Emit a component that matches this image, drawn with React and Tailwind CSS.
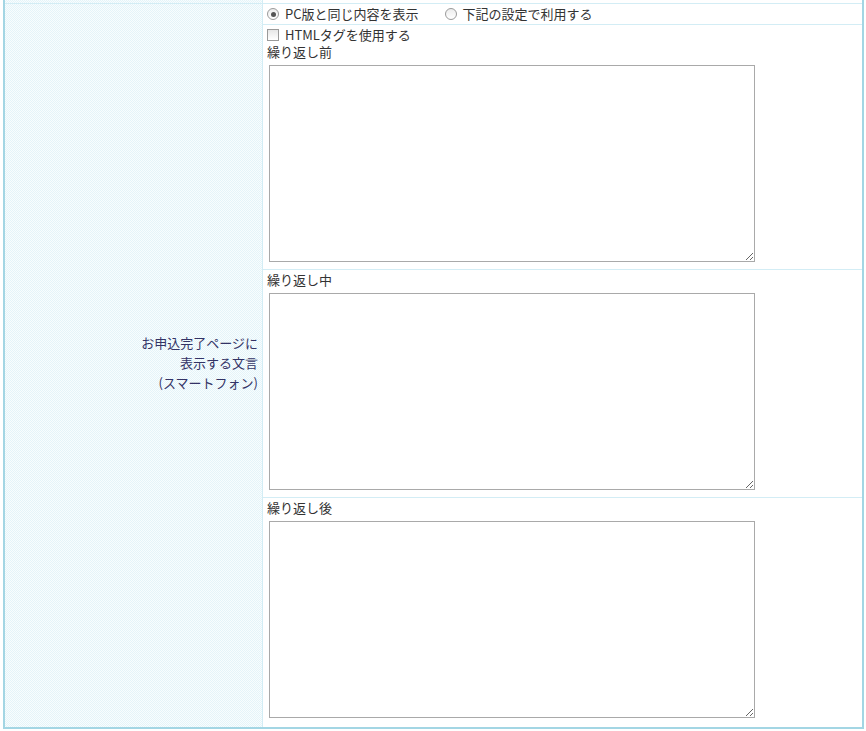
import React from 'react';

const font = { fontFamily: '"Noto Sans CJK JP", "Noto Sans", sans-serif' };

function Radio({ checked }) {
    return (
        <span className="relative inline-block w-[12px] h-[12px] rounded-full border border-[#9a9a9a] bg-[linear-gradient(#ececec,#ffffff)] shrink-0">
            {checked && (
                <span className="absolute left-[2.5px] top-[2.5px] w-[5px] h-[5px] rounded-full bg-[#555]" />
            )}
        </span>
    );
}

function Checkbox() {
    return (
        <span className="inline-block w-[12px] h-[12px] border border-[#9a9a9a] bg-[linear-gradient(#e6e6e6,#ffffff)] shrink-0" />
    );
}

function Area() {
    return (
        <textarea className="block mt-[5px] mb-[7px] ml-[2px] w-[486px] h-[197px] border border-[#a9a9a9] bg-white outline-none" />
    );
}

export default function App() {
    return (
        <div className="bg-white min-h-[731px] text-[13px] text-[#333]" style={font}>
            <div className="ml-[3px] w-[861px] h-[729px] flex border-x-2 border-b-2 border-[#a3d6e4]">
                <div className="w-[258px] shrink-0 flex flex-col border-r border-[#d3edf5] bg-[conic-gradient(#e4f4f9_25%,#f8fdfe_0_50%,#e4f4f9_0_75%,#f8fdfe_0)] bg-[length:2px_2px]">
                    <div className="h-[3px]" />
                    <div className="flex-1 border-t border-[#d3edf5] flex flex-col justify-center items-end pr-[4px] pb-[6px] leading-[20px] text-[#333366]">
                        <div>お申込完了ページに</div>
                        <div>表示する文言</div>
                        <div>(スマートフォン)</div>
                    </div>
                </div>

                <div className="flex-1 flex flex-col">
                    <div className="h-[3px]" />
                    <div className="h-[22px] border-t border-b border-[#d3edf5] flex items-center pl-[4px]">
                        <label className="flex items-center gap-[6px]">
                            <Radio checked />
                            <span>PC版と同じ内容を表示</span>
                        </label>
                        <label className="flex items-center gap-[6px] ml-[26px]">
                            <Radio />
                            <span>下記の設定で利用する</span>
                        </label>
                    </div>

                    <div className="pl-[4px] pt-[1px] leading-[17px] border-b border-[#d3edf5]">
                        <label className="flex items-center gap-[6px]">
                            <Checkbox />
                            <span>HTMLタグを使用する</span>
                        </label>
                        <div>繰り返し前</div>
                        <Area />
                    </div>

                    <div className="pl-[4px] pt-[1px] leading-[17px] border-b border-[#d3edf5]">
                        <div>繰り返し中</div>
                        <Area />
                    </div>

                    <div className="pl-[4px] pt-[1px] leading-[17px]">
                        <div>繰り返し後</div>
                        <Area />
                    </div>
                </div>
            </div>
        </div>
    );
}
